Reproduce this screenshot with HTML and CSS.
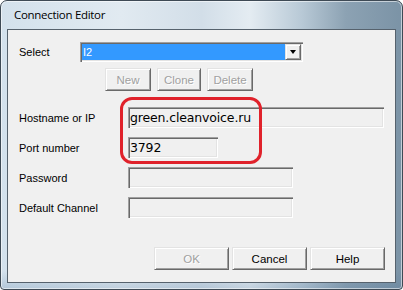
FILE: index.html
```html
<!DOCTYPE html>
<html lang="en">
<head>
    <meta charset="UTF-8">
    <title>Connection Editor</title>
    <link rel="stylesheet" href="styles.css">
</head>
<body>
    <div class="window">
        <!-- Glass title bar -->
        <div class="titlebar">
            <span class="title">Connection Editor</span>
        </div>

        <div class="client">
            <!-- Connection selector -->
            <div class="row select-row">
                <span class="label select-label">Select</span>
                <div class="combo">
                    <span class="combo-value">I2</span>
                    <span class="combo-button"><span class="arrow"></span></span>
                </div>
            </div>

            <div class="row actions">
                <button class="btn disabled btn-new">New</button>
                <button class="btn disabled btn-clone">Clone</button>
                <button class="btn disabled btn-delete">Delete</button>
            </div>

            <!-- Connection fields -->
            <div class="fields">
                <div class="row field-row">
                    <span class="label">Hostname or IP</span>
                    <div class="input input-wide">green.cleanvoice.ru</div>
                </div>
                <div class="row field-row">
                    <span class="label">Port number</span>
                    <div class="input input-short">3792</div>
                </div>
                <div class="row field-row">
                    <span class="label">Password</span>
                    <div class="input input-mid"></div>
                </div>
                <div class="row field-row">
                    <span class="label">Default Channel</span>
                    <div class="input input-mid"></div>
                </div>
            </div>

            <div class="row footer">
                <button class="btn disabled">OK</button>
                <button class="btn">Cancel</button>
                <button class="btn">Help</button>
            </div>

            <!-- red marker drawn over the host/port fields -->
            <div class="highlight"></div>
        </div>
    </div>
</body>
</html>
```

FILE: styles.css
```css
/* Connection Editor dialog */
* {
    box-sizing: border-box;
}

body {
    margin: 0;
    width: 403px;
    height: 290px;
    overflow: hidden;
    background: #ffffff;
    font-family: "Liberation Sans", Arial, sans-serif;
    font-size: 11px;
    color: #000;
}

.window {
    width: 403px;
    height: 290px;
    padding: 0 6px 6px 6px;
    display: flex;
    flex-direction: column;
    border: 1px solid #3e4a55;
    border-radius: 7px 7px 4px 4px;
    background:
        linear-gradient(180deg, rgba(255, 255, 255, 0) 270px, rgba(70, 110, 150, 0.25) 290px),
        linear-gradient(90deg, #d3e1ec 0%, #e1eaf1 30%, #d2dee8 50%, #e4ecf2 62%, #b8c9d6 75%, #8ca2b3 86%, #7b93a6 100%);
    box-shadow: inset 0 0 0 1px rgba(255, 255, 255, 0.55);
}

.titlebar {
    height: 28px;
    padding: 0 0 1px 7px;
    display: flex;
    align-items: center;
}

.title {
    font-family: "Open Sans", "Liberation Sans", sans-serif;
    font-size: 11.5px;
    letter-spacing: -0.3px;
    color: #000;
}

.client {
    flex: 1;
    position: relative;
    display: flex;
    flex-direction: column;
    padding: 12px 10px 0 11px;
    background: #f0f0f0;
    border: 1px solid #56626d;
}

.row {
    display: flex;
    align-items: center;
}

.label {
    width: 109px;
    flex-shrink: 0;
}

.select-row {
    height: 20px;
}

.select-label {
    width: 61px;
}

.combo {
    width: 223px;
    height: 20px;
    display: flex;
    padding: 2px;
    background: #fff;
    box-shadow: inset 1px 1px 0 #a0a0a0, inset 2px 2px 0 #696969, inset -1px -1px 0 #fff, inset -2px -2px 0 #e3e3e3;
}

.combo-value {
    flex: 1;
    background: #3399ff;
    color: #fff;
    padding-left: 1px;
    line-height: 16px;
}

.combo-button {
    width: 16px;
    display: flex;
    align-items: center;
    justify-content: center;
    background: #f0f0f0;
    border: 1px solid;
    border-color: #e3e3e3 #696969 #696969 #e3e3e3;
    box-shadow: inset 1px 1px 0 #fff, inset -1px -1px 0 #a0a0a0;
}

.arrow {
    width: 0;
    height: 0;
    border-left: 3.5px solid transparent;
    border-right: 3.5px solid transparent;
    border-top: 4px solid #000;
}

.actions {
    margin-top: 6px;
    height: 23px;
    padding-left: 86px;
    gap: 6px;
}

.btn {
    height: 23px;
    width: 75px;
    padding: 0;
    font-family: "Liberation Sans", Arial, sans-serif;
    font-size: 11.5px;
    color: #000;
    background: #f0f0f0;
    border: 1px solid;
    border-color: #e3e3e3 #696969 #696969 #e3e3e3;
    box-shadow: inset 1px 1px 0 #fff, inset -1px -1px 0 #a0a0a0;
}

.btn.disabled {
    color: #a0a0a0;
    text-shadow: 1px 1px 0 #fff;
}

.btn-new,
.btn-delete {
    width: 46px;
}

.btn-clone {
    width: 44px;
}

.fields {
    margin-top: 16px;
    display: flex;
    flex-direction: column;
    gap: 9px;
}

.field-row {
    height: 21px;
}

.input {
    height: 21px;
    padding: 0 0 0 2px;
    font-family: "DejaVu Sans", Verdana, sans-serif;
    font-size: 12.5px;
    letter-spacing: -0.15px;
    line-height: 21px;
    background: #f0f0f0;
    box-shadow: inset 1px 1px 0 #a0a0a0, inset 2px 2px 0 #696969, inset -1px -1px 0 #fff, inset -2px -2px 0 #e3e3e3;
}

.input-wide {
    width: 256px;
}

.input-short {
    width: 90px;
}

.input-mid {
    width: 165px;
}

.footer {
    margin-top: 29px;
    justify-content: flex-end;
    gap: 3px;
}

.highlight {
    position: absolute;
    left: 112px;
    top: 67px;
    width: 142px;
    height: 67px;
    border: 3px solid #e0222b;
    border-radius: 12px;
}
```
